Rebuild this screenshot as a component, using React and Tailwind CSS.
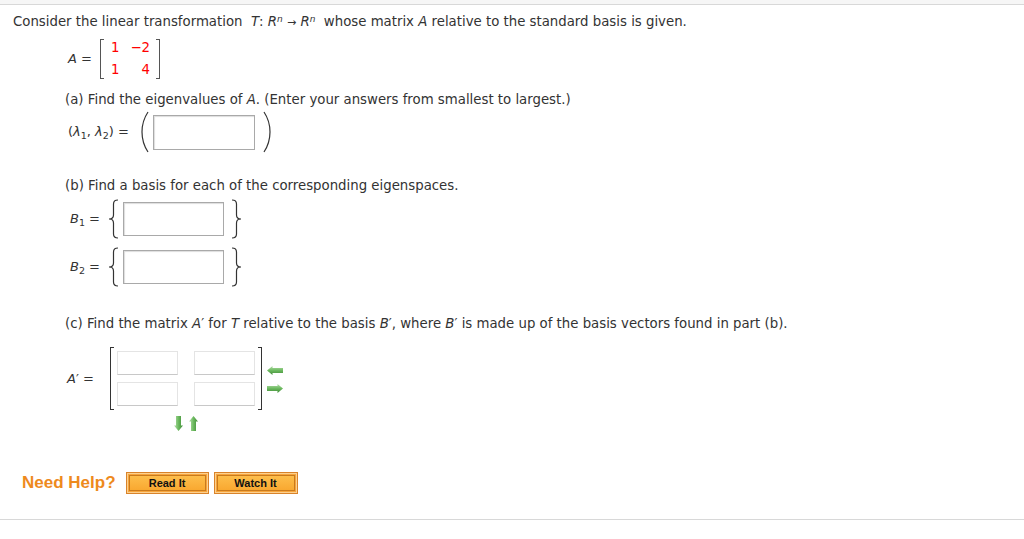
import React from "react";

const V = { fontFamily: '"DejaVu Sans", Verdana, sans-serif' };

function Arrow({ dir }) {
  const flip = dir === "right";
  return (
    <svg width="16" height="9" viewBox="0 0 16 9" style={{ transform: flip ? "scaleX(-1)" : undefined }}>
      <defs>
        <linearGradient id={"g" + dir} x1="0" y1="0" x2="0" y2="1">
          <stop offset="0" stopColor="#b5dfaa" />
          <stop offset="0.5" stopColor="#6cb95f" />
          <stop offset="1" stopColor="#3d8a34" />
        </linearGradient>
      </defs>
      <path d="M0 4.5 L5.5 0 L5.5 2 L16 2 L16 7 L5.5 7 L5.5 9 Z" fill={`url(#g${dir})`} />
    </svg>
  );
}

function VArrow({ up }) {
  return (
    <svg width="9" height="15" viewBox="0 0 9 15">
      <defs>
        <linearGradient id={up ? "gu" : "gd"} x1="0" y1="0" x2="1" y2="0">
          <stop offset="0" stopColor="#b5dfaa" />
          <stop offset="0.5" stopColor="#6cb95f" />
          <stop offset="1" stopColor="#3d8a34" />
        </linearGradient>
      </defs>
      {up ? (
        <path d="M4.5 0 L9 5.5 L7 5.5 L7 15 L2 15 L2 5.5 L0 5.5 Z" fill="url(#gu)" />
      ) : (
        <path d="M4.5 15 L9 9.5 L7 9.5 L7 0 L2 0 L2 9.5 L0 9.5 Z" fill="url(#gd)" />
      )}
    </svg>
  );
}

function Brace({ right }) {
  return (
    <svg width="13" height="40" viewBox="0 0 13 40" className="block">
      {right ? (
        <path d="M2 1 Q6.5 1 6.5 5 L6.5 16 Q6.5 20 11 20 Q6.5 20 6.5 24 L6.5 35 Q6.5 39 2 39" fill="none" stroke="#333" strokeWidth="1.2" />
      ) : (
        <path d="M11 1 Q6.5 1 6.5 5 L6.5 16 Q6.5 20 2 20 Q6.5 20 6.5 24 L6.5 35 Q6.5 39 11 39" fill="none" stroke="#333" strokeWidth="1.2" />
      )}
    </svg>
  );
}

function Paren({ right }) {
  return (
    <svg width="10" height="42" viewBox="0 0 10 42" className="block">
      {right ? (
        <path d="M2 1 Q8 10 8 21 Q8 32 2 41" fill="none" stroke="#333" strokeWidth="1.2" />
      ) : (
        <path d="M8 1 Q2 10 2 21 Q2 32 8 41" fill="none" stroke="#333" strokeWidth="1.2" />
      )}
    </svg>
  );
}

function MInput() {
  return <div className="w-[61px] h-[24px] border border-[#e4e4e4] border-b-[#c8c8c8] bg-white" />;
}

function Btn({ children, w }) {
  return (
    <div
      className={`${w} h-[22px] border border-[#d9832a] bg-[#f7a53c] p-[2px]`}
      style={{ boxShadow: "inset 0 0 0 1px #fcd08f" }}
    >
      <div
        className="h-full flex items-center justify-center border border-[#c97a1d] bg-gradient-to-b from-[#fdbd4a] to-[#f9a830] text-[11px] font-bold text-[#111]"
        style={{ fontFamily: '"Liberation Sans", Arial, sans-serif' }}
      >
        {children}
      </div>
    </div>
  );
}

const Box = ({ w, h }) => (
  <div className={`${w} ${h} border border-[#a9a9a9] bg-white`} style={{ boxShadow: "inset 1px 1px 1px #ddd" }} />
);

export default function App() {
  return (
    <div className="w-[1024px] h-[539px] bg-white text-[#333] text-[13.3px] overflow-hidden" style={V}>
      <div className="h-[5px] bg-[#f6f6f6] border-b border-[#d8d8d8]" />
      <div className="pl-[13px] pt-[9px] leading-[16px]">
        Consider the linear transformation&nbsp; <i>T</i>: <i>R</i>
        <sup className="text-[9px] italic">n</sup> <span className="text-[11px]">→</span> <i>R</i>
        <sup className="text-[9px] italic">n</sup>&nbsp; whose matrix <i>A</i> relative to the standard basis is given.
      </div>

      {/* matrix A */}
      <div className="flex items-center pl-[68px] mt-[8px]">
        <span className="text-[13px] w-[32px]"><i>A</i> =</span>
        <div className="flex items-stretch h-[40px]">
          <div className="w-[4px] border-l border-t border-b border-[#555]" />
          <div className="grid grid-cols-[auto_auto] gap-x-[11px] content-center pl-[7px] pr-[6px] text-[#f00] text-[13.3px] leading-[22px]">
            <span>1</span><span>−2</span>
            <span>1</span><span className="text-right">4</span>
          </div>
          <div className="w-[4px] border-r border-t border-b border-[#555]" />
        </div>
      </div>

      <div className="pl-[65px] mt-[13px] leading-[16px]">
        (a) Find the eigenvalues of <i>A</i>. (Enter your answers from smallest to largest.)
      </div>

      <div className="flex items-center pl-[68px] mt-[3px]">
        <span className="text-[13px] w-[70px] whitespace-nowrap">(<i>λ</i><sub className="text-[9.5px]">1</sub>, <i>λ</i><sub className="text-[9.5px]">2</sub>) =</span>
        <div className="ml-[2px]"><Paren /></div>
        <div className="ml-[3px]"><Box w="w-[102px]" h="h-[35px]" /></div>
        <div className="ml-[7px]"><Paren right /></div>
      </div>

      <div className="pl-[65px] mt-[25px] leading-[16px]">
        (b) Find a basis for each of the corresponding eigenspaces.
      </div>

      <div className="flex items-center pl-[70px] mt-[5px]">
        <span className="text-[13px] w-[37px] whitespace-nowrap"><i>B</i><sub className="text-[9.5px]">1</sub> =</span>
        <Brace />
        <div className="ml-[3px]"><Box w="w-[101px]" h="h-[34px]" /></div>
        <div className="ml-[6px]"><Brace right /></div>
      </div>
      <div className="flex items-center pl-[70px] mt-[8px]">
        <span className="text-[13px] w-[37px] whitespace-nowrap"><i>B</i><sub className="text-[9.5px]">2</sub> =</span>
        <Brace />
        <div className="ml-[3px]"><Box w="w-[101px]" h="h-[34px]" /></div>
        <div className="ml-[6px]"><Brace right /></div>
      </div>

      <div className="pl-[65px] mt-[29px] leading-[16px]">
        (c) Find the matrix <i>A</i>′ for <i>T</i> relative to the basis <i>B</i>′, where <i>B</i>′ is made up of the basis vectors found in part (b).
      </div>

      <div className="flex pl-[67px] mt-[15px]">
        <div className="flex flex-col">
          <div className="flex items-center">
            <span className="text-[13px] w-[43px] whitespace-nowrap"><i>A</i>′ =</span>
            <div className="flex items-stretch h-[63px]">
              <div className="w-[4px] border-l border-t border-b border-[#333]" />
              <div className="grid grid-cols-[61px_61px] gap-x-[16px] gap-y-[7px] content-center px-[3px]">
                <MInput /><MInput /><MInput /><MInput />
              </div>
              <div className="w-[4px] border-r border-t border-b border-[#333]" />
            </div>
            <div className="flex flex-col gap-[9px] ml-[5px] mt-[2px]">
              <Arrow dir="left" />
              <Arrow dir="right" />
            </div>
          </div>
          <div className="flex gap-[6px] pl-[107px] mt-[6px]">
            <VArrow />
            <VArrow up />
          </div>
        </div>
      </div>

      <div className="flex items-center pl-[22px] mt-[39px]">
        <span className="text-[17px] font-bold text-[#ee8a1d] mr-[10px]" style={{ fontFamily: '"Liberation Sans", Arial, sans-serif' }}>
          Need Help?
        </span>
        <Btn w="w-[83px]">Read It</Btn>
        <div className="w-[5px]" />
        <Btn w="w-[84px]">Watch It</Btn>
      </div>

      <div className="mt-[23px] border-t border-[#d8d8d8]" />
    </div>
  );
}
